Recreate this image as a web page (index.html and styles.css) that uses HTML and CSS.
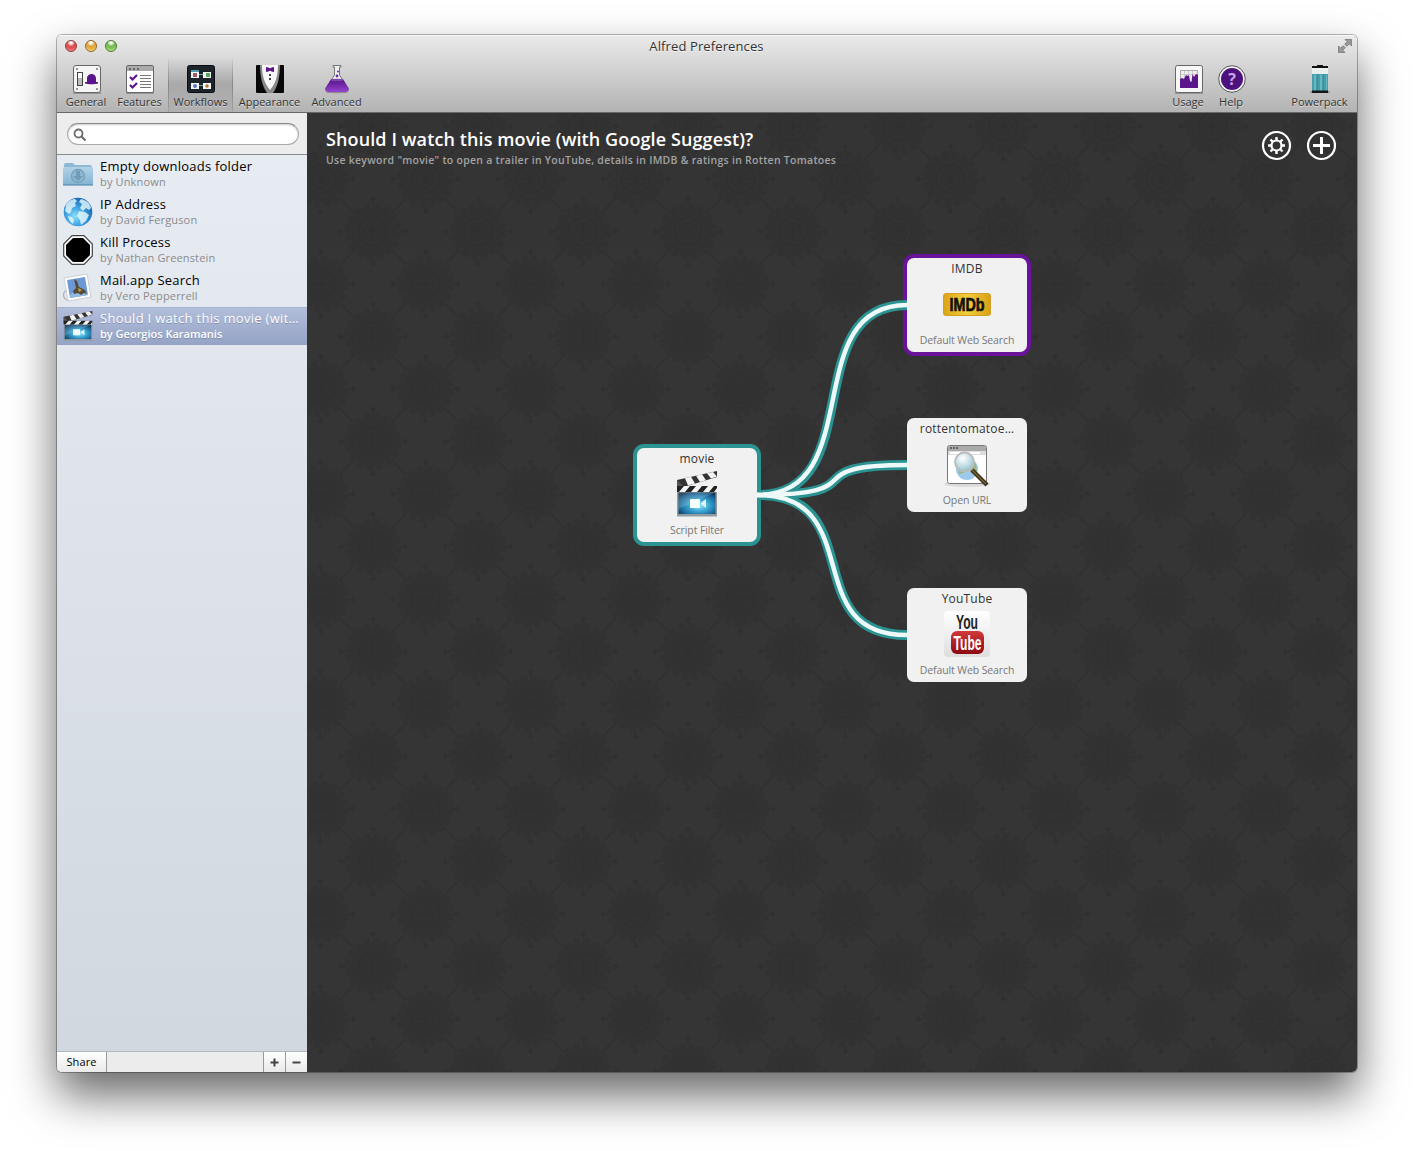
FILE: index.html
```html
<!DOCTYPE html>
<html lang="en">
<head>
<meta charset="utf-8">
<title>Alfred Preferences</title>
<link rel="stylesheet" href="styles.css">
</head>
<body>
<svg class="defs" width="0" height="0" aria-hidden="true">
  <defs>
    <radialGradient id="screen" cx=".55" cy=".6" r=".7"><stop offset="0" stop-color="#9ae9fb"/><stop offset=".4" stop-color="#3aa5d4"/><stop offset=".8" stop-color="#145a8a"/><stop offset="1" stop-color="#0a2c4b"/></radialGradient>
    <linearGradient id="red" x2="0" y2="1"><stop offset="0" stop-color="#d23a3c"/><stop offset="1" stop-color="#8d0610"/></linearGradient>
    <linearGradient id="plate" x2="0" y2="1"><stop offset="0" stop-color="#fff"/><stop offset="1" stop-color="#dedede"/></linearGradient>
    <linearGradient id="gold" x2="1"><stop offset="0" stop-color="#d9a416"/><stop offset=".5" stop-color="#f2cf3c"/><stop offset="1" stop-color="#d79f17"/></linearGradient>
    <radialGradient id="lens" cx=".4" cy=".3" r=".8"><stop offset="0" stop-color="#fff"/><stop offset=".6" stop-color="#b9d9e0"/><stop offset="1" stop-color="#8ab1bd"/></radialGradient>
    <radialGradient id="ocean" cx=".4" cy=".65" r=".7"><stop offset="0" stop-color="#8be0fd"/><stop offset=".5" stop-color="#3a9fe0"/><stop offset="1" stop-color="#145fa8"/></radialGradient>
    <linearGradient id="folder" x2="0" y2="1"><stop offset="0" stop-color="#b0d2e6"/><stop offset="1" stop-color="#82b2d0"/></linearGradient>
    <linearGradient id="liquid" x2="0" y2="1"><stop offset="0" stop-color="#57158e"/><stop offset="1" stop-color="#9744cf"/></linearGradient>
    <symbol id="clapper" viewBox="0 0 42 46">
      <path d="M1 9 41 0v6L1 18z" fill="#333"/>
      <path d="m9 7.200 6-1.400 4 6.700-7 2.100zM20 4.700l6-1.400 4 6-6 1.800zM31 2.200l6-1.300 4 4.600-6 2z" fill="#f4f4f4"/>
      <path d="M1 9v10l6-4z" fill="#555"/>
      <path d="M1 15h40v6H1z" fill="#222"/>
      <path d="m8 15-5 6h6l5-6zM20 15l-5 6h6l5-6zM32 15l-5 6h6l5-6zM41 17l-3 4h3z" fill="#f4f4f4"/>
      <path d="M1 21h40v24.500H1z" fill="#929ba0"/>
      <path d="M2.500 21.500h37V43h-37z" fill="url(#screen)"/>
      <path d="M2.500 21.500h37L2.500 38z" fill="#fff" opacity=".16"/>
      <rect x="14" y="28" width="10" height="9" rx="1" fill="#f4ffff"/><path d="m25 32 5-4v9l-5-4z" fill="#dff7ff"/>
    </symbol>
  </defs>
</svg>

<main class="window">
  <header class="chrome">
    <div class="titlebar">
      <div class="lights"><i class="light close"></i><i class="light minimise"></i><i class="light zoom"></i></div>
      <h1 class="window-title">Alfred Preferences</h1>
      <svg class="fullscreen" width="14" height="14" viewBox="0 0 14 14"><path d="M7 .5h6.500V7L11.300 4.800 8.800 7.300 6.700 5.200l2.500-2.500zM.5 7l2.200 2.200 2.500-2.500 2.100 2.100-2.500 2.500L7 13.500H.5z" fill="#999" stroke="#777" stroke-width=".8"/></svg>
    </div>
    <nav class="toolbar">
      <a class="tool general">
        <svg width="32" height="30" viewBox="0 0 32 30"><path d="M2 28h28v2H2z" fill="#777" opacity=".6"/><rect x="2.500" y="1.500" width="27" height="27" rx="2.500" fill="#f5f5f5" stroke="#666"/><g fill="#777"><circle cx="6" cy="5" r="1"/><circle cx="26" cy="5" r="1"/><circle cx="6" cy="25" r="1"/><circle cx="26" cy="25" r="1"/></g><rect x="6.500" y="8.500" width="5" height="13" fill="#bbb" stroke="#444"/><path d="M7 9h4v5H7z" fill="#fff"/><path d="M14 18h2v-3.500c0-3 2-4.500 4.500-4.500s4.500 1.500 4.500 4.500V18h2v1.500c-3 .9-10 .9-13 0z" fill="#5b168b"/></svg>
        <span>General</span>
      </a>
      <a class="tool features">
        <svg width="32" height="30" viewBox="0 0 32 30"><path d="M2 28h28v2H2z" fill="#777" opacity=".6"/><rect x="2.500" y="1.500" width="27" height="27" rx="1.500" fill="#fff" stroke="#666"/><path d="M3 2h26v5H3z" fill="#aaa"/><path d="M5 4h2v2H5zM9 4h2v2H9zM13 4h2v2h-2z" fill="#666"/><path d="m6 13 2.500 2.500L13 11M6 21l2.500 2.500L13 19" fill="none" stroke="#5b168b" stroke-width="2.200"/><path d="M16 11.500h11M16 14.500h11M16 17.500h11M16 20.500h11M16 23.500h11" stroke="#777"/></svg>
        <span>Features</span>
      </a>
      <a class="tool workflows active">
        <svg width="32" height="30" viewBox="0 0 32 30"><rect x="2.500" y="1.500" width="27" height="27" rx="2" fill="#1b232b" stroke="#0b0d10"/><path d="M13 10.500h6M13 21.500h6" stroke="#6ba7ae"/><path d="M6 6h8v8H6z" fill="#4f9dae"/><path d="M6 8h8v6H6zM18 8h8v6h-8zM6 19h8v6H6zM18 19h8v6h-8z" fill="#f6f6f6"/><path d="M8 9h4v4H8z" fill="#9c5f63"/><path d="M21 9h4v4h-4z" fill="#54ad5a"/><circle cx="10" cy="22" r="2" fill="#6078bd"/><circle cx="22" cy="22" r="1.800" fill="#b17927"/></svg>
        <span>Workflows</span>
      </a>
      <a class="tool appearance">
        <svg width="32" height="30" viewBox="0 0 32 30"><rect x="2" y="1" width="28" height="28" rx="1" fill="#080808"/><path d="M6 1h20c0 11-2 21-7 28h-6C8 22 6 12 6 1z" fill="#888"/><path d="M8 1h16c0 10-2 18-8 25C10 19 8 11 8 1z" fill="#f7f7f7"/><path d="M12 3c2 0 3 1 4 1.200C17 4 18 3 20 3v5c-2 0-3-1-4-1.200C15 7 14 8 12 8z" fill="#5b168b"/><path d="M15 10h2v2h-2zM15 14h2v2h-2z" fill="#444"/></svg>
        <span>Appearance</span>
      </a>
      <a class="tool advanced">
        <svg width="32" height="30" viewBox="0 0 32 30"><ellipse cx="16" cy="28" rx="12" ry="1.500" fill="#777" opacity=".4"/><path d="M12 1.500h8v1.500h-1.500v8L27 24c1 2 0 4-3 4H8c-3 0-4-2-3-4l8.500-13V3H12z" fill="#efefef" stroke="#777"/><path d="M9.500 16h13l5 8c1 2-1 4-3.500 4H8c-2.500 0-4.500-2-3.500-4z" fill="url(#liquid)"/><ellipse cx="16" cy="16" rx="6.800" ry="1.300" fill="#7e45ab"/><circle cx="16" cy="12" r="1.400" fill="#6b2b98"/><circle cx="17" cy="7.500" r="1" fill="#6b2b98"/></svg>
        <span>Advanced</span>
      </a>
      <a class="tool usage">
        <svg width="32" height="30" viewBox="0 0 32 30"><path d="M2 28h28v2H2z" fill="#777" opacity=".6"/><rect x="2.500" y="1.500" width="27" height="27" rx="2" fill="#f7f7f7" stroke="#666"/><path d="M7.500 6.500h17v17h-17z" fill="#eee" stroke="#aaa"/><path d="M11.500 7v8M15.500 7v8M19.500 7v8M8 10.500h16" stroke="#ccc"/><path d="M7 24V15l2-1 2 1 2-4 2 1 1-1 1 6 1.500 1 1-8 1.500 3 2-3 2 1v13z" fill="#5b168b"/></svg>
        <span>Usage</span>
      </a>
      <a class="tool help">
        <svg width="32" height="30" viewBox="0 0 32 30"><circle cx="16" cy="15" r="13.300" fill="#f4f4f4" stroke="#555"/><circle cx="16" cy="15" r="11" fill="#4d117d"/><text class="question" x="16" y="20.500">?</text></svg>
        <span>Help</span>
      </a>
      <a class="tool powerpack">
        <svg width="32" height="30" viewBox="0 0 32 30"><path d="M6 27h20v2H6z" fill="#555" opacity=".35"/><path d="M8 2h5V1h6v1h5v2H8z" fill="#111"/><path d="M8 4h16v7H8z" fill="#e9eeee"/><path d="M8 10h16v17H8z" fill="#45a0ac"/><path d="M10 11h2v16h-2zM16 11h2v16h-2zM22 11h1v16h-1z" fill="#66b7c1"/><path d="M13.500 10v17M19.500 10v17" stroke="#2b7a84" opacity=".5"/><path d="M8 26.500h16V29H8z" fill="#151515"/></svg>
        <span>Powerpack</span>
      </a>
    </nav>
  </header>

  <div class="content">
    <aside class="sidebar">
      <div class="search-bar">
        <div class="search"><svg width="14" height="14" viewBox="0 0 14 14"><circle cx="5.500" cy="5.500" r="4" fill="none" stroke="#6c6c6c" stroke-width="1.800"/><path d="m8.500 8.500 4 4" stroke="#6c6c6c" stroke-width="2.200"/></svg></div>
      </div>
      <ul class="workflow-list">
        <li class="workflow">
          <svg width="30" height="30" viewBox="0 0 30 30"><path d="M1 6q0-2 2-2h7l2 2h15q2 0 2 2v5H1z" fill="#8fb9d2"/><rect y="8" width="30" height="18.500" rx="1.500" fill="url(#folder)"/><path d="M0 25h30v1.500H0z" fill="#6a9ab9"/><circle cx="15" cy="17" r="6.500" fill="#91b7cf" stroke="#719fbd" stroke-width="1.300"/><path d="M13 12h4v5h3l-5 5-5-5h3z" fill="#6e9cba"/></svg>
          <div><b>Empty downloads folder</b><small>by Unknown</small></div>
        </li>
        <li class="workflow">
          <svg width="30" height="30" viewBox="0 0 30 30"><circle cx="15" cy="15" r="14.300" fill="url(#ocean)"/><path d="M3 8c2-4 6-6 9-6l2 2-2 2 1 3-4 2-1 4-2 2-4-3zM18 2c5 1 9 4 10 9l-2 2-3-2-3 3-3-3 2-4-3-2zM16 14l6 1 4 3-3 6-5 4-1-5-3-4zM5 19l4 1 2 3-1 4c-3-2-4-4-5-8z" fill="#e9faff" opacity=".8"/></svg>
          <div><b>IP Address</b><small>by David Ferguson</small></div>
        </li>
        <li class="workflow">
          <svg width="30" height="30" viewBox="0 0 30 30"><path d="M9 .7h12l8.300 8.300v12L21 29.300H9L.7 21V9z" fill="#fff" stroke="#444" stroke-width="1.200"/><path d="M10 3h10l7 7v10l-7 7H10l-7-7V10z" fill="#000"/></svg>
          <div><b>Kill Process</b><small>by Nathan Greenstein</small></div>
        </li>
        <li class="workflow">
          <svg width="30" height="30" viewBox="0 0 30 30"><circle cx="6" cy="22" r="5.500" fill="none" stroke="#aab6c4" stroke-width="1.300"/><path d="m1 5 23-4 4 23-23 4z" fill="#fff" stroke="#cbd0d6"/><path d="m4 7 18-3 3 18-18 3z" fill="#6e98d5"/><path d="M7 22c5-5 12-5 18-2v2L7 25z" fill="#92b9e3"/><path d="m11 6 3 2 2 6 6 3 2 4-3-1-3 2-3-2-4 1-1-3 3-3z" fill="#554c35"/><path d="m15 15 4 2-3 2z" fill="#cda44e"/></svg>
          <div><b>Mail.app Search</b><small>by Vero Pepperrell</small></div>
        </li>
        <li class="workflow selected">
          <svg width="30" height="30" viewBox="0 0 42 46" preserveAspectRatio="none"><use href="#clapper" width="42" height="46"/></svg>
          <div><b>Should I watch this movie (wit…</b><small>by Georgios Karamanis</small></div>
        </li>
      </ul>
      <footer class="actions">
        <button class="share">Share</button>
        <button class="icon-button"><svg width="9" height="9"><path d="M4.500 .5v8M.5 4.500h8" stroke="#444" stroke-width="2"/></svg></button>
        <button class="icon-button"><svg width="9" height="9"><path d="M.5 4.500h8" stroke="#444" stroke-width="2"/></svg></button>
      </footer>
    </aside>

    <section class="canvas">
      <svg class="wallpaper" width="1050" height="959">
        <defs>
          <g id="rosette" fill="none" stroke="#2b2b2b">
            <circle r="24" fill="#323232" stroke="none"/>
            <circle r="25" stroke="#313131" stroke-width="7" stroke-dasharray="6 3.820"/>
            <circle r="14" stroke-width="1.500" stroke-dasharray="2.500 1"/>
            <circle r="9" stroke-width=".6"/>
            <path d="M0-10V10M-10 0H10M-7-7 7 7M7-7-7 7" stroke-width=".9"/>
            <circle r="20" stroke-width="2" stroke-dasharray="2 3" opacity=".5"/>
            <circle r="26" stroke-width="2" stroke-dasharray="1.500 3" opacity=".5"/>
            <path d="M0-28v-7M-3-32.500h6M0 28v7M-3 32.500h6M-28 0h-7M-32.500-3v6M28 0h7M32.500-3v6M19-19l8-8M-19-19l-8-8M19 19l8 8M-19 19l-8 8" stroke-width="1.500" opacity=".8"/>
          </g>
          <pattern id="damask" x="13.500" y="13.500" width="105" height="105" patternUnits="userSpaceOnUse">
            <use href="#rosette" x="52.500" y="0"/><use href="#rosette" x="52.500" y="105"/><use href="#rosette" x="0" y="52.500"/><use href="#rosette" x="105" y="52.500"/>
          </pattern>
        </defs>
        <rect width="1050" height="959" fill="url(#damask)"/>
      </svg>
      <div class="heading">
        <div class="heading-text">
          <h2>Should I watch this movie (with Google Suggest)?</h2>
          <p>Use keyword "movie" to open a trailer in YouTube, details in IMDB &amp; ratings in Rotten Tomatoes</p>
        </div>
        <svg width="30" height="30" viewBox="0 0 30 30" fill="none" stroke="#fff"><circle cx="14.500" cy="15.500" r="13.500" stroke-width="2.200"/><g transform="translate(-.5 .5)"><circle cx="15" cy="15" r="5" stroke-width="2.200"/><path d="M15 10V6.500M15 20v3.500M10 15H6.500M20 15h3.500M11.500 11.500 9 9M18.500 18.500 21 21M18.500 11.500 21 9M11.500 18.500 9 21" stroke-width="2.400"/></g></svg>
        <svg width="30" height="30" viewBox="0 0 30 30" fill="none" stroke="#fff"><circle cx="14.500" cy="15.500" r="13.500" stroke-width="2.200"/><path d="M14.500 7v17M6 15.500h17" stroke-width="3"/></svg>
      </div>

      <div class="node trigger"><b>movie</b><svg width="42" height="46"><use href="#clapper"/></svg><span>Script Filter</span></div>
      <div class="node imdb"><b>IMDB</b><svg width="50" height="46" viewBox="0 0 50 46"><rect x="1.500" y="11.500" width="47" height="22" rx="2.500" fill="url(#gold)" stroke="#d3a025"/><text class="imdb-logo" x="25" y="29" textLength="35" lengthAdjust="spacingAndGlyphs">IMDb</text></svg><span>Default Web Search</span></div>
      <div class="node rotten"><b>rottentomatoe…</b><svg width="46" height="46" viewBox="0 0 46 46"><ellipse cx="23" cy="42" rx="23" ry="3" fill="#bbb" opacity=".4"/><rect x="3.500" y="3.500" width="39" height="38" rx="2" fill="#fff" stroke="#777"/><path d="M4 4h38v5H4z" fill="#aaa"/><path d="M6 5h2v2H6zM9 5h2v2H9zM12 5h2v2h-2z" fill="#666"/><path d="M4 9h38v4H4z" fill="#ddd"/><path d="M6 10h30v2H6z" fill="#fff"/><circle cx="23" cy="27" r="11" fill="#9dc9ed"/><path d="m14 23 6-2 3 5-3 5-5 1zM27 19l5 3 1 7-5 3-3-5z" fill="#99b881"/><path d="m28 28 15 15" stroke="#3a2f18" stroke-width="4.200"/><path d="m28 28 14 14" stroke="#786239" stroke-width="1.500"/><circle cx="20.500" cy="20" r="9.500" fill="url(#lens)" stroke="#bbb" stroke-width="1.800"/></svg><span>Open URL</span></div>
      <div class="node youtube"><b>YouTube</b><svg width="46" height="46" viewBox="0 0 46 46"><rect width="46" height="46" rx="4" fill="url(#plate)"/><text class="youtube-top" x="23" y="18" textLength="22" lengthAdjust="spacingAndGlyphs">You</text><rect x="7" y="20" width="33" height="23" rx="6" fill="url(#red)"/><text class="youtube-bottom" x="23.500" y="38.500" textLength="28" lengthAdjust="spacingAndGlyphs">Tube</text></svg><span>Default Web Search</span></div>

      <svg class="links" width="1050" height="959" fill="none">
        <g stroke="#2b9492" stroke-width="10"><path d="M452 382C562 382 490 192 600 192"/><path d="M452 382C572 382 485 352 600 352"/><path d="M452 382C562 382 490 522 600 522"/></g>
        <g stroke="#edf8f8" stroke-width="4.500"><path d="M450 382C562 382 490 192 600 192"/><path d="M450 382C572 382 485 352 600 352"/><path d="M450 382C562 382 490 522 600 522"/></g>
      </svg>
    </section>
  </div>
</main>
</body>
</html>
```
FILE: styles.css
```css
* { box-sizing: border-box; }
body { margin: 0; padding: 35px 57px 0; height: 1151px; overflow: hidden; background: #fff; font-family: "Open Sans", "Noto Sans", sans-serif; color: #111; }
svg { display: block; flex: none; }
.defs { position: absolute; }
h1, h2, p, ul { margin: 0; padding: 0; }

.window { width: 1300px; height: 1037px; display: flex; flex-direction: column; border-radius: 5px; overflow: hidden; box-shadow: 0 0 0 1px rgba(0,0,0,.28), 0 23px 46px rgba(0,0,0,.6); }

.chrome { height: 78px; flex: none; background: linear-gradient(#ebebeb, #d2d2d2 45%, #b3b3b3); border-bottom: 1px solid #686868; box-shadow: inset 0 1px #f8f8f8; }
.titlebar { height: 22px; display: flex; align-items: center; padding: 0 5px 0 8px; }
.lights { display: flex; gap: 8px; width: 80px; }
.light { width: 12px; height: 12px; border-radius: 50%; border: 1px solid; }
.close { border-color: #8b3838; background: radial-gradient(circle at 50% 15%, #fff 0 10%, #df5052 40%, #e05355 60%, #ffa6a1); }
.minimise { border-color: #91632b; background: radial-gradient(circle at 50% 15%, #fff 0 10%, #dea13a 40%, #e6ae43 60%, #fff08c); }
.zoom { border-color: #4b7932; background: radial-gradient(circle at 50% 15%, #fff 0 10%, #73b94d 40%, #80c45a 60%, #d0ff9b); }
.window-title { flex: 1; text-align: center; font-size: 13px; font-weight: 400; letter-spacing: .12px; color: #333; text-shadow: 0 1px #f4f4f4; line-height: 22px; }
.fullscreen { margin-left: 70px; }
.toolbar { display: flex; height: 55px; }
.tool { display: flex; flex-direction: column; align-items: center; padding-top: 7px; font-size: 11px; line-height: 14px; color: #333; text-shadow: 0 1px rgba(255,255,255,.5); white-space: nowrap; }
.tool svg { margin-left: 1px; }
.tool span { margin-top: 1px; }
.general { width: 50px; margin-left: 4px; }
.features { width: 57px; }
.workflows { width: 65px; }
.appearance { width: 73px; }
.advanced { width: 61px; }
.usage { width: 44px; margin-left: auto; }
.help { width: 42px; }
.powerpack { width: 65px; margin-left: 35px; margin-right: 5px; }
.active { background: linear-gradient(rgba(90,90,90,0), rgba(90,90,90,.28) 50%, rgba(90,90,90,.03)); border: solid; border-width: 0 1px; border-image: linear-gradient(rgba(110,110,110,0), rgba(110,110,110,.6), rgba(110,110,110,.2)) 1; }
.question { font: bold 16px "Open Sans", sans-serif; text-anchor: middle; fill: #c9a4e8; text-shadow: none; }

.content { flex: 1; display: flex; min-height: 0; }
.sidebar { width: 250px; flex: none; display: flex; flex-direction: column; background: linear-gradient(#e8ecf3, #d0d7df); }
.search-bar { height: 42px; padding: 10px 8px 0 10px; background: #ededed; border-bottom: 1px solid #8b8b8b; }
.search { height: 22px; border: 1px solid #aaa; border-top-color: #888; border-radius: 11px; background: #fff; padding: 4px 5px; box-shadow: inset 0 1px 2px #ccc; }
.workflow-list { flex: 1; list-style: none; }
.workflow { height: 38px; display: flex; align-items: center; gap: 7px; padding: 0 5px 0 6px; }
.workflow div { min-width: 0; display: flex; flex-direction: column; white-space: nowrap; padding-bottom: 2px; }
.workflow b { font-size: 13px; font-weight: 400; line-height: 17px; letter-spacing: .22px; color: #000; }
.workflow small { font-size: 11px; line-height: 14px; letter-spacing: .15px; color: #8b8b8b; }
.selected { background: linear-gradient(#b2bedb, #95a3c5); box-shadow: inset 0 1px #a5b2d0; }
.workflow.selected b, .workflow.selected small { color: #fff; text-shadow: 0 1px rgba(80,90,120,.4); }
.workflow.selected b { letter-spacing: .3px; }
.workflow.selected small { font-weight: 600; letter-spacing: 0; }
.actions { height: 21px; display: flex; background: #ececec; border-top: 1px solid #b4b7bb; }
.actions button { border: 0; padding: 0; background: linear-gradient(#fff, #eaeaea); font: 11px "Open Sans", sans-serif; color: #000; }
.actions .share { width: 50px; border-right: 1px solid #999; margin-right: auto; padding-bottom: 2px; letter-spacing: .1px; }
.actions .icon-button { width: 22px; border-left: 1px solid #999; display: flex; align-items: center; justify-content: center; }

.canvas { flex: 1; position: relative; background: #353535; }
.wallpaper, .links { position: absolute; inset: 0; }
.wallpaper { opacity: .7; }
.heading { position: relative; display: flex; gap: 15px; padding: 14px 20px 0 19px; }
.heading svg { margin-top: 3px; overflow: visible; }
.heading-text { flex: 1; white-space: nowrap; }
.heading h2 { font-size: 18px; line-height: 24px; font-weight: 600; letter-spacing: .11px; color: #fff; }
.heading p { margin-top: 1px; font-size: 10.500px; line-height: 16px; font-weight: 600; letter-spacing: .27px; color: #a3a3a3; }

.node { position: absolute; left: 600px; width: 120px; height: 94px; border-radius: 7px; background: #f1f1f1; display: flex; flex-direction: column; align-items: center; padding-top: 3px; white-space: nowrap; }
.node b { font-size: 12px; line-height: 16px; font-weight: 400; letter-spacing: .2px; color: #333; }
.node svg { margin: 4px 0 6px; overflow: visible; }
.node span { font-size: 10.500px; line-height: 15px; letter-spacing: -.1px; color: #777; }
.trigger { left: 330px; top: 335px; box-shadow: 0 0 0 4px #2b9492; }
.imdb { top: 145px; box-shadow: 0 0 0 4px #68139a; }
.imdb svg { margin: 5px 0; }
.rotten { top: 305px; }
.rotten svg { margin: 5px 0; }
.youtube { top: 475px; }
.imdb-logo { font: bold 19px "Liberation Sans", sans-serif; text-anchor: middle; fill: #111; stroke: #111; stroke-width: .7px; }
.youtube-top, .youtube-bottom { font: bold 20px "Liberation Sans", sans-serif; text-anchor: middle; fill: #222; }
.youtube-bottom { fill: #fff; }
```
